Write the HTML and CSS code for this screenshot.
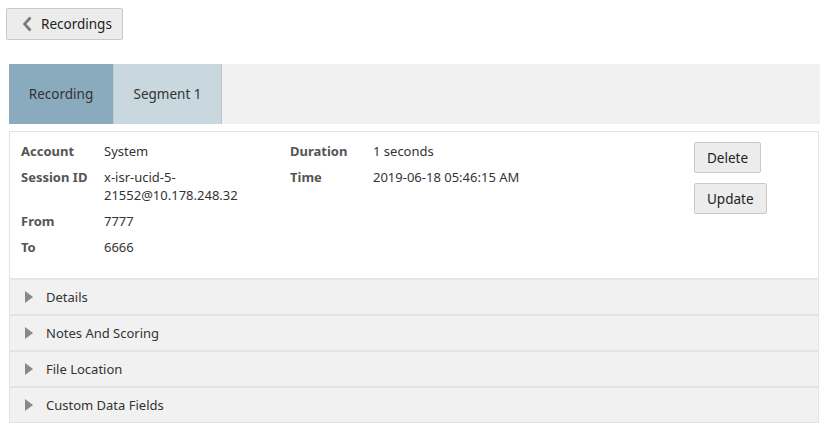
FILE: index.html
```html
<!DOCTYPE html>
<html>
<head>
<meta charset="utf-8">
<link rel="stylesheet" href="styles.css">
</head>
<body>
<div class="top">
  <button class="back"><svg class="chev" width="10" height="16" viewBox="0 0 10 16"><path d="M8.5 1.5 L2.5 8 L8.5 14.5" fill="none" stroke="#7a7a7a" stroke-width="2.6"/></svg>Recordings</button>
</div>
<div class="tabs">
  <div class="tab active">Recording</div>
  <div class="tab seg">Segment 1</div>
</div>
<div class="panel">
  <div class="summary">
    <div class="col">
      <div class="row"><div class="lbl">Account</div><div class="val">System</div></div>
      <div class="row"><div class="lbl">Session ID</div><div class="val">x-isr-ucid-5-<br>21552@10.178.248.32</div></div>
      <div class="row"><div class="lbl">From</div><div class="val">7777</div></div>
      <div class="row"><div class="lbl">To</div><div class="val">6666</div></div>
    </div>
    <div class="col mid">
      <div class="row"><div class="lbl">Duration</div><div class="val">1 seconds</div></div>
      <div class="row"><div class="lbl">Time</div><div class="val">2019-06-18 05:46:15 AM</div></div>
    </div>
    <div class="actions">
      <button class="btn">Delete</button>
      <button class="btn">Update</button>
    </div>
  </div>
  <div class="acc"><span class="tri"></span>Details</div>
  <div class="acc"><span class="tri"></span>Notes And Scoring</div>
  <div class="acc"><span class="tri"></span>File Location</div>
  <div class="acc"><span class="tri"></span>Custom Data Fields</div>
</div>
</body>
</html>
```
FILE: styles.css
```css
* { box-sizing: border-box; }
body {
  margin: 0;
  background: #fff;
  font-family: "Noto Sans", "Open Sans", sans-serif;
  font-size: 13px;
  color: #333;
}
.top { padding: 8px 0 0 6px; height: 64px; }
.back {
  display: flex;
  align-items: center;
  gap: 9px;
  height: 32px;
  width: 117px;
  padding: 0 0 0 15px;
  background: #ececec;
  border: 1px solid #c9c9c9;
  border-radius: 2px;
  font: inherit;
  font-size: 13.5px;
  color: #222;
}
.chev { display: block; }
.tabs {
  display: flex;
  margin: 0 7px 0 9px;
  height: 60px;
  background: #f1f1f1;
}
.tab {
  display: flex;
  align-items: center;
  justify-content: center;
  font-size: 13.5px;
  color: #333;
}
.tab.active { width: 104px; background: #8aabbd; }
.tab.seg { width: 109px; background: #c8d8de; border-right: 1px solid #b3c5cd; border-left: 1px solid #bccdd4; }
.panel {
  margin: 7px 8px 0 9px;
  border: 1px solid #e3e3e3;
  border-bottom: none;
}
.summary {
  display: grid;
  grid-template-columns: 269px 404px auto;
  padding: 10px 11px 0;
  height: 147px;
  border-bottom: 1px solid #e3e3e3;
}
.row { display: flex; line-height: 18px; margin-bottom: 8px; }
.lbl { width: 83px; font-weight: bold; color: #555; }
.val { color: #333; }
.actions { display: flex; flex-direction: column; align-items: flex-start; gap: 10px; padding-top: 0; }
.btn {
  height: 31px;
  padding: 0 12px;
  background: #ececec;
  border: 1px solid #c9c9c9;
  border-radius: 2px;
  font: inherit;
  font-size: 13.5px;
  color: #222;
}
.acc {
  display: flex;
  align-items: center;
  height: 36px;
  background: #f1f1f1;
  border: 1px solid #e3e3e3;
  border-top: 1px solid #e8e8e8;
  margin: 0 -1px 0 -1px;
  padding-left: 15px;
  color: #333;
}
.acc + .acc { border-top: 1px solid #e3e3e3; }
.tri {
  width: 0; height: 0;
  border-top: 6px solid transparent;
  border-bottom: 6px solid transparent;
  border-left: 8px solid #888;
  margin-right: 13px;
}
```
